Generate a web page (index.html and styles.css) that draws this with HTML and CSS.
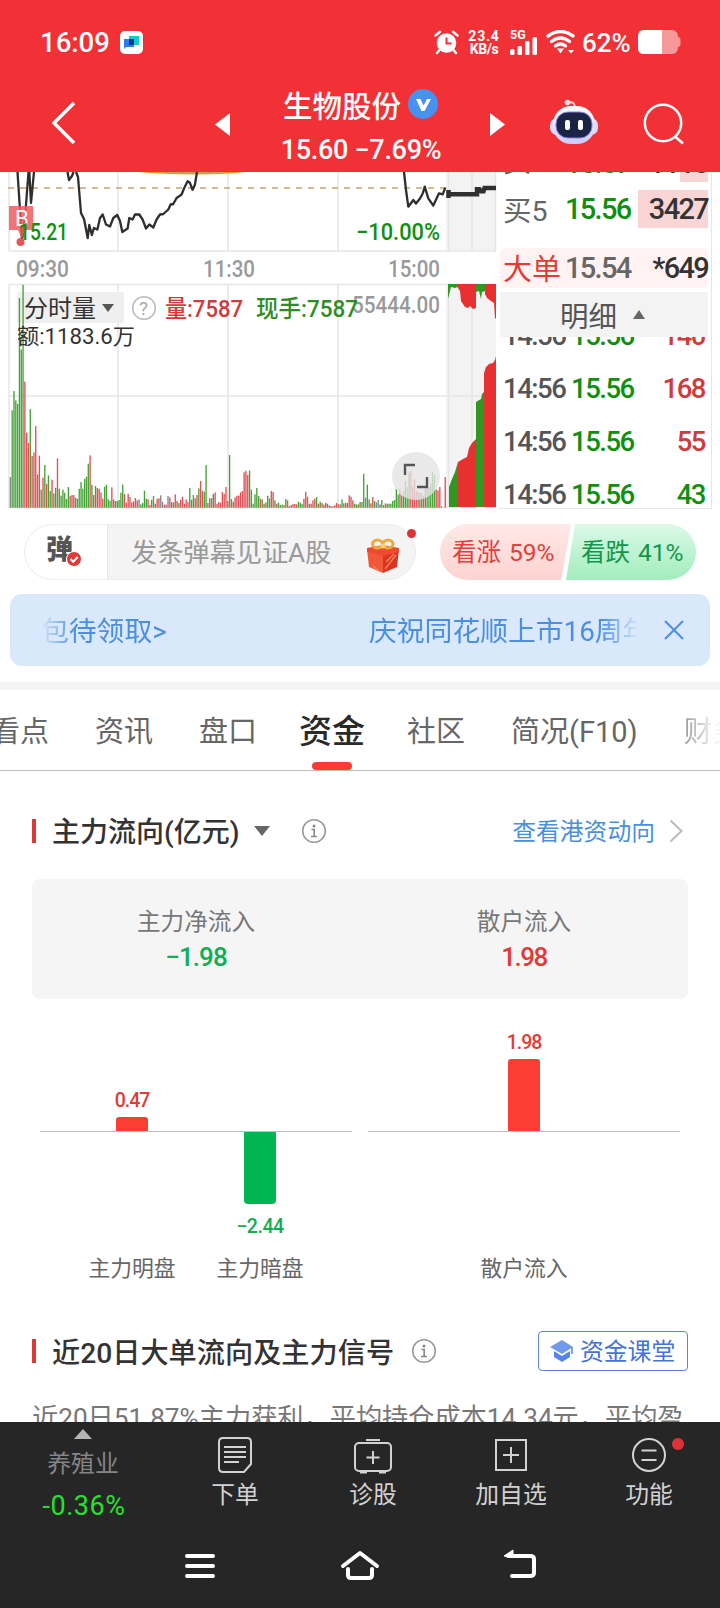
FILE: index.html
```html
<!DOCTYPE html>
<html lang="zh-CN">
<head>
  <meta charset="UTF-8" />
  <meta name="viewport" content="width=device-width, initial-scale=1.0"/>
  <title>生物股份</title>
  <link rel="stylesheet" href="styles.css">
</head>
<body>
  <header class="top">
    <div class="status">
      <span class="clock">16:09</span>
      <svg class="app-icon" width="23" height="23" viewBox="0 0 23 23">
        <rect width="23" height="23" rx="5" fill="#fff"/>
        <path d="M9 5h10v9H9z" fill="#18c8cf"/>
        <path d="M4 8h10v8H6l-2 2z" fill="#2b7cf2"/>
        <path d="M9 8h5v6H9z" fill="#0b3c8c"/>
      </svg>
      <svg class="alarm" width="25" height="25" viewBox="0 0 25 25">
        <circle cx="12.5" cy="13" r="9.8" fill="#fff"/>
        <path d="M1.5 5.5 6 1.8M23.5 5.5 19 1.8M5.5 20 3 23M19.5 20l2.5 3" stroke="#fff" stroke-width="2.4" stroke-linecap="round"/>
        <path d="M12.5 7.500v6h5" fill="none" stroke="#f23137" stroke-width="2"/>
      </svg>
      <div class="speed"><span>23.4</span><span>KB/s</span></div>
      <div class="signal">
        <span>5G</span>
        <svg width="28" height="18" viewBox="0 0 28 18" fill="#fff">
          <rect x="0" y="12" width="4.5" height="6" rx="1.5"/>
          <rect x="7.5" y="9" width="4.5" height="9" rx="1.5"/>
          <rect x="15" y="4" width="4.5" height="14" rx="1.5"/>
          <rect x="22.5" y="0" width="4.5" height="18" rx="1.5"/>
        </svg>
      </div>
      <svg class="wifi" width="30" height="24" viewBox="0 0 30 24">
        <g fill="none" stroke="#fff" stroke-width="3.4" stroke-linecap="round">
          <path d="M2 6Q14.500-3 27 6"/>
          <path d="M5.500 11.500Q14.500 4.500 23.500 11.500"/>
          <path d="M9.500 16Q14.500 12 19.500 16"/>
        </g>
        <path d="M11 18.500h7l-3.500 5zM22 20h6l-3 3.500z" fill="#fff"/>
      </svg>
      <span class="percent">62%</span>
      <svg class="battery" width="43" height="24" viewBox="0 0 43 24">
        <rect width="40" height="24" rx="6" fill="#fff" opacity=".5"/>
        <path d="M40 7q2.500 0 2.500 3v4q0 3-2.500 3z" fill="#fff" opacity=".5"/>
        <path d="M6 0h18v24H6q-6 0-6-6V6q0-6 6-6z" fill="#fff"/>
      </svg>
    </div>

    <div class="nav">
      <svg class="back" width="24" height="44" viewBox="0 0 24 44"><path d="M22 2 2 22l20 20" fill="none" stroke="#fff" stroke-width="3.5"/></svg>
      <svg class="prev" width="15" height="23" viewBox="0 0 15 23"><path d="M15 0v23L0 11.500z" fill="#fff"/></svg>
      <div class="stock">
        <div class="stock-name"><span>生物股份</span>
          <svg width="30" height="30" viewBox="0 0 30 30"><circle cx="15" cy="15" r="15" fill="#4792ee"/><path d="M8 10h4.500l3 6.500L19 10h4l-6.500 12h-3z" fill="#fff"/></svg>
        </div>
        <div class="stock-price">15.60 −7.69%</div>
      </div>
      <svg width="15" height="23" viewBox="0 0 15 23"><path d="M0 0v23l15-11.500z" fill="#fff"/></svg>
      <svg class="robot" width="48" height="46" viewBox="0 0 48 46">
        <defs>
          <linearGradient id="head" x1="0" y1="0" x2="0" y2="1"><stop offset="0" stop-color="#fff"/><stop offset="1" stop-color="#ccc9fb"/></linearGradient>
        </defs>
        <path d="M18 3.500q7-1.500 7 5" fill="none" stroke="#f9d3dc" stroke-width="2"/>
        <circle cx="17.5" cy="3.5" r="2.8" fill="#fbdce2"/>
        <rect x="0" y="19" width="48" height="17" rx="7" fill="#dcd9f8"/>
        <rect x="3" y="7" width="42" height="38" rx="18" fill="url(#head)"/>
        <rect x="6" y="13" width="36" height="26" rx="12" fill="#1a2545" stroke="#8d80e8" stroke-width="1"/>
        <rect x="15" y="21" width="5" height="10" rx="2" fill="#fff"/>
        <rect x="28" y="21" width="5" height="10" rx="2" fill="#fff"/>
      </svg>
      <svg class="search" width="42" height="42" viewBox="0 0 42 42"><g fill="none" stroke="#fff" stroke-width="2.5"><circle cx="20" cy="20" r="18.2"/><path d="m32 33.500 8 7"/></g></svg>
    </div>
  </header>

  <section class="quote">
    <svg class="chart" width="498" height="337" viewBox="0 172 498 337">
      <defs><clipPath id="plot"><rect x="9" y="172" width="487" height="337"/></clipPath></defs>
      <rect x="446" y="172" width="50" height="79" fill="#f3f3f3"/>
      <rect x="446" y="284" width="50" height="224" fill="#f3f3f3"/>
      <path d="M9 172v79M118 172v79M228 172v79M338 172v79M448.500 172v79M472 172v79M495.500 172v79M9 251h487M9 284.500h487M9 284v224M118 284v224M228 284v224M338 284v224M448.500 284v224M472 284v224M9 396h487M9 507.500h487" stroke="#e6e6e6" stroke-width="1.5" fill="none"/>
      <path d="M8 188h438" stroke="#c4a56a" stroke-width="1.5" stroke-dasharray="6 6"/>
      <path d="M138 172h108q-20 2-50 2.500-35-.3-58-2.500z" fill="#f5951f"/>
      <path d="M165 172h58v1.500q-29 1-58 0z" fill="#c9a050"/>
      <g clip-path="url(#plot)" fill="none" stroke="#2e2e2e" stroke-width="2.3" stroke-linejoin="round">
        <path d="M17.500 172 20 210l2 30 3-22 3.500-46M29.300 172l1.700 31 3-31M67.500 172l1.500 8 3-4 1.500-4M76 172l2 5 3 36 3 6 3.700 19 1.600-13 2.600 10 2-7 3.500 1.500 2.600-11.500 2.700-3.500 3.300 10 4 2 3.300-8.500 4-3 2.700 6 2.300 11 5.300-3.500 1.700-10.500 3.300 1.500 2.400-5h4.300l3.300 5 3.400 9 3.300-4 4 3 3.300-8 3.400-5 3.300-.5 5-4.500 2.300-5 2.700-.5 3.300-6 5-3.500 2.400-6 3.600-7.300 2.300 1.600 2.700 7 2.300-5L197 172M404 172l2 18 2.300 16.700 5-6.700 2.700 3.500 4-5 2.700-5 2-6.800 3.600 11.600 5 7.300 5.700-12.300 3.700 1 2.600-6.700"/>
      </g>
      <path d="M448.500 190v8M448.500 194.300H477v-5h2.500l1.500 2h2.500l1-3.300H496" fill="none" stroke="#303030" stroke-width="4.500"/>
      <path d="M9 206h24v24h-8l-3 9-4-9H9z" fill="#ee5d5f" opacity=".85"/>
      <circle cx="20.5" cy="242" r="4" fill="#ea5557"/>
      <text x="15" y="226" class="mark">B</text>
      <text x="19" y="240" class="num green" textLength="49" lengthAdjust="spacingAndGlyphs">15.21</text>
      <text x="356" y="240" class="num green" textLength="84" lengthAdjust="spacingAndGlyphs">−10.00%</text>
      <text x="16" y="277" class="num gray" textLength="53" lengthAdjust="spacingAndGlyphs">09:30</text>
      <text x="203" y="277" class="num gray" textLength="52" lengthAdjust="spacingAndGlyphs">11:30</text>
      <text x="388" y="277" class="num gray" textLength="52" lengthAdjust="spacingAndGlyphs">15:00</text>

      <rect x="17" y="292" width="107" height="31" rx="3" fill="#efefef"/>
      <g id="volume"></g>

      <!-- call auction -->
      <path d="M448 284h10v3l-3 1-4-1-3 12z" fill="#33961f"/>
      <path d="M458 284h18v24l-3 1-3-3-2 2-3-1-4-6-1-10-2-3z" fill="#e83030"/>
      <path d="M476 284h9v7l-3 1-1 7-2-8-3 1z" fill="#33961f"/>
      <path d="M485 284h11v35l-1-1-1-15-3-2-4-3-1-2-1-2z" fill="#e83030"/>
      <path d="M449 507v-20l3-8 3-7 3-10v45z" fill="#33961f"/>
      <path d="M458 507v-45l5-3 4-2 2-9 3-5 4-4v68z" fill="#e83030"/>
      <path d="M476 507V402l5-3 1-5 2-2v115z" fill="#33961f"/>
      <path d="M484 507V373l2-6 3-3 4-1 2-3 1-4v151z" fill="#e83030"/>

      <text x="24" y="316.5" class="cn" textLength="72">分时量</text>
      <path d="M102 304h12l-6 8z" fill="#555"/>
      <circle cx="144" cy="308" r="11.3" fill="none" stroke="#bbb" stroke-width="1.5"/>
      <text x="139" y="315" class="qmark">?</text>
      <text x="165" y="317" class="cn cn-red" textLength="78" lengthAdjust="spacingAndGlyphs">量:7587</text>
      <text x="352" y="313" class="num gray" textLength="88" lengthAdjust="spacingAndGlyphs">55444.00</text>
      <text x="256" y="317" class="cn cn-green" textLength="102" lengthAdjust="spacingAndGlyphs">现手:7587</text>
      <text x="17" y="344" class="cn cn-small" textLength="118" lengthAdjust="spacingAndGlyphs">额:1183.6万</text>

      <circle cx="416" cy="476" r="24" fill="#e3e3e3" opacity=".8"/>
      <path d="M405 475v-10h10M417 487h10v-10" fill="none" stroke="#555" stroke-width="2.4"/>
    </svg>

    <div class="book">
      <div class="book-row book-cut"><span class="b-label">买4</span><span class="b-price green">15.57</span><span class="b-vol">1118</span></div>
      <div class="book-row"><span class="b-label">买5</span><span class="b-price green">15.56</span><span class="b-vol b-fill">3427</span></div>
      <div class="book-row big"><span class="b-label">大单</span><span class="b-price">15.54</span><span class="b-vol">*649</span></div>
      <div class="detail">明细<svg width="12" height="9" viewBox="0 0 12 9"><path d="M6 0l6 9H0z" fill="#666"/></svg></div>
      <div class="ticks">
        <div class="tick"><span>14:56</span><span class="green">15.56</span><b class="up">140</b></div>
        <div class="tick"><span>14:56</span><span class="green">15.56</span><b class="up">168</b></div>
        <div class="tick"><span>14:56</span><span class="green">15.56</span><b class="up">55</b></div>
        <div class="tick"><span>14:56</span><span class="green">15.56</span><b class="green">43</b></div>
      </div>
    </div>
  </section>

  <section class="barrage">
    <div class="say">
      <div class="say-switch">
        <span>弹</span>
        <svg class="say-check" width="16" height="16" viewBox="0 0 16 16"><circle cx="8" cy="8" r="7.5" fill="#e0393a" stroke="#fff"/><path d="m4.500 8 2.700 2.800 4.500-4.800" fill="none" stroke="#fff" stroke-width="2"/></svg>
      </div>
      <div class="say-input"><span>发条弹幕见证A股</span>
        <svg width="34" height="36" viewBox="0 0 34 36">
          <path d="M1 11 17 15v20L3 29z" fill="#f0583a"/>
          <path d="M33 11 17 15v20l14-6z" fill="#da3524"/>
          <path d="M1 10 17 7l16 3v4l-16 4L1 14z" fill="#ee4a30"/>
          <path d="m19 31 11-14M20 24l8-8M7 28l6 5" stroke="#f57d55" stroke-width="1.5"/>
          <g fill="none" stroke="#eea83c" stroke-width="3"><ellipse cx="11.5" cy="6" rx="5" ry="4"/><ellipse cx="22" cy="6" rx="5" ry="4"/></g>
          <circle cx="17" cy="8" r="2.5" fill="#ffd27c"/>
        </svg>
      </div>
      <i class="dot say-dot"></i>
    </div>
    <div class="vote">
      <div class="vote-up">看涨 59%</div>
      <div class="vote-down">看跌 41%</div>
    </div>
  </section>

  <section class="notice">
    <div class="marquee"><span>包待领取&gt;</span><span>庆祝同花顺上市16周年</span></div>
    <svg width="20" height="20" viewBox="0 0 20 20"><path d="m1 1 18 18M19 1 1 19" stroke="#4a8fe0" stroke-width="2"/></svg>
  </section>

  <nav class="tabs">
    <span>看点</span><span>资讯</span><span>盘口</span><span class="active">资金</span><span>社区</span><span>简况(F10)</span><span>财务</span>
  </nav>

  <section class="panel">
    <div class="panel-head">
      <h2>主力流向(亿元)</h2>
      <svg class="caret" width="16" height="10" viewBox="0 0 16 10"><path d="M0 0h16L8 10z" fill="#666"/></svg>
      <svg class="info" width="26" height="26" viewBox="0 0 26 26"><circle cx="13" cy="13" r="11.3" fill="none" stroke="#999" stroke-width="1.6"/><circle cx="13" cy="8" r="1.5" fill="#888"/><path d="M10.500 11.500h2.700v6.500M10 18.500h6" fill="none" stroke="#888" stroke-width="1.6"/></svg>
      <a class="more"><span>查看港资动向</span><svg width="14" height="24" viewBox="0 0 14 24"><path d="m1.500 1.500 11 10.500-11 10.500" fill="none" stroke="#bbb" stroke-width="2"/></svg></a>
    </div>

    <div class="summary">
      <div><span>主力净流入</span><b class="fall">−1.98</b></div>
      <div><span>散户流入</span><b class="rise">1.98</b></div>
    </div>

    <div class="flow">
      <div class="group">
        <div class="col">
          <div class="above"><span class="rise">0.47</span><i class="bar" style="height: 14px"></i></div>
          <div class="below"></div>
          <label>主力明盘</label>
        </div>
        <div class="col">
          <div class="above"></div>
          <div class="below"><i class="bar" style="height: 72px"></i><span class="fall">−2.44</span></div>
          <label>主力暗盘</label>
        </div>
      </div>
      <div class="group">
        <div class="col">
          <div class="above"><span class="rise">1.98</span><i class="bar" style="height: 72px"></i></div>
          <div class="below"></div>
          <label>散户流入</label>
        </div>
      </div>
    </div>

    <div class="panel-head second">
      <h2>近20日大单流向及主力信号</h2>
      <svg class="info info-near" width="26" height="26" viewBox="0 0 26 26"><circle cx="13" cy="13" r="11.3" fill="none" stroke="#999" stroke-width="1.6"/><circle cx="13" cy="8" r="1.5" fill="#888"/><path d="M10.500 11.500h2.700v6.500M10 18.500h6" fill="none" stroke="#888" stroke-width="1.6"/></svg>
      <a class="lesson"><svg width="24" height="22" viewBox="0 0 24 22"><path d="M12 0 0 7l12 7 11-7z" fill="#7199ee"/><path d="M4 11v6l8 5 8-5v-6l-8 5z" fill="#5585ea"/><path d="M22 7v7" stroke="#5585ea" stroke-width="1.5"/></svg><span>资金课堂</span></a>
    </div>
    <p class="desc">近20日51.87%主力获利，平均持仓成本14.34元，平均盈</p>
  </section>

  <footer class="bottom">
    <div class="actions">
      <div class="sector">
        <svg width="18" height="10" viewBox="0 0 18 10"><path d="M9 0l9 10H0z" fill="#b5b5b5"/></svg>
        <span>养殖业</span>
        <b>-0.36%</b>
      </div>
      <div class="action">
        <svg width="40" height="40" viewBox="0 0 40 40"><path d="M8 3h24q4 0 4 4v22l-7 8H8q-4 0-4-4V7q0-4 4-4zM9 12h22M9 17h22M9 22h22M9 27h15" fill="none" stroke="#d2d2d2" stroke-width="2"/></svg>
        下单
      </div>
      <div class="action">
        <svg width="40" height="40" viewBox="0 0 40 40"><g fill="none" stroke="#d2d2d2" stroke-width="2"><rect x="2" y="8" width="36" height="28" rx="4"/><path d="M13 5h14M20 16v13M13.500 22.500h13M7 37.500h7M26 37.500h7"/></g></svg>
        诊股
      </div>
      <div class="action">
        <svg width="40" height="40" viewBox="0 0 40 40"><path d="M5 5h30v30H5zM20 12v16M12 20h16" fill="none" stroke="#d2d2d2" stroke-width="2"/></svg>
        加自选
      </div>
      <div class="action">
        <svg width="40" height="40" viewBox="0 0 40 40"><g fill="none" stroke="#d2d2d2" stroke-width="2"><circle cx="20" cy="20" r="16"/><path d="M12.500 15.500h15M12.500 25h15"/></g></svg>
        功能
        <i class="dot action-dot"></i>
      </div>
    </div>
    <div class="keys">
      <svg width="40" height="40" viewBox="0 0 40 40"><path d="M7 10h26M7 20h26M7 30h26" stroke="#fff" stroke-width="4" stroke-linecap="round"/></svg>
      <svg width="40" height="40" viewBox="0 0 40 40"><path d="M3 20 20 7l17 13M8 23v6q0 3 3 3h18q3 0 3-3v-6" fill="none" stroke="#fff" stroke-width="4" stroke-linecap="round" stroke-linejoin="round"/></svg>
      <svg width="40" height="40" viewBox="0 0 40 40"><path d="M12 30h18q4 0 4-3V13q0-3-4-3H8" fill="none" stroke="#fff" stroke-width="4" stroke-linecap="round"/><path d="M4 10 13 4v7z" fill="#fff" stroke="#fff" stroke-linejoin="round"/></svg>
    </div>
  </footer>

  <script src="volume.js"></script>
</body>
</html>
```
FILE: styles.css
```css
* {
  box-sizing: border-box;
}

body {
  margin: 0;
  width: 720px;
  height: 1608px;
  overflow: hidden;
  display: flex;
  flex-direction: column;
  background-color: #fff;
  color: #333;
  font-family: Roboto, "Noto Sans CJK SC", sans-serif;
}

svg {
  display: block;
  flex: none;
}

i, b {
  font-style: normal;
  font-weight: 400;
}

.green {
  color: #0f8f0f;
  fill: #0f8f0f;
}

.up {
  color: #cf3a3a;
}

.rise {
  color: #e23b36;
}

.fall {
  color: #0fae52;
}

.dot {
  position: absolute;
  border-radius: 50%;
  background-color: #e03236;
}

/* header */
.top {
  flex: none;
  height: 172px;
  background-color: #f23137;
  color: #fff;
}

.status {
  display: flex;
  align-items: center;
  height: 84px;
  padding-left: 40px;
  white-space: nowrap;
}

.clock {
  width: 80px;
  padding-top: 1px;
  font-size: 27.5px;
  font-weight: 500;
}

.alarm {
  margin-left: 291px;
}

.speed {
  display: flex;
  flex-direction: column;
  align-items: center;
  width: 36px;
  margin-left: 7px;
  padding-top: 1px;
  font-size: 14px;
  font-weight: 700;
  line-height: 13px;
}

.speed span {
  letter-spacing: -0.4px;
}

.speed span:first-child {
  letter-spacing: 0.8px;
}

.signal {
  display: flex;
  flex-direction: column;
  margin-left: 8px;
  width: 28px;
  font-size: 12.5px;
  font-weight: 700;
  line-height: 10px;
}

.signal svg {
  margin-top: -3px;
}

.wifi {
  margin-left: 8px;
}

.percent {
  width: 56px;
  margin-left: 6px;
  padding-top: 1px;
  font-size: 26px;
  font-weight: 500;
}

.nav {
  display: flex;
  align-items: center;
  height: 80px;
  padding-left: 52px;
}

.back {
  margin-top: -3px;
}

.prev {
  margin-left: 139px;
}

.stock {
  width: 260px;
  padding-top: 4px;
  text-align: center;
}

.stock-name {
  display: flex;
  align-items: center;
  justify-content: center;
  gap: 7px;
  height: 43px;
  padding-left: 1px;
  font-size: 29.5px;
  font-weight: 500;
}

.stock-name span {
  margin-top: -2px;
}

.stock-name svg {
  margin-top: -1px;
}

.stock-price {
  height: 43px;
  padding-left: 2px;
  font-size: 27px;
  font-weight: 500;
  line-height: 48px;
  letter-spacing: -0.3px;
}

.robot {
  margin-left: 45px;
  margin-top: -4px;
}

.search {
  margin-left: 45px;
}

/* quote area */
.quote {
  flex: none;
  display: flex;
  height: 337px;
  overflow: hidden;
}

.num {
  font-size: 23px;
  font-weight: 500;
}

.gray {
  fill: #999;
}

.mark {
  font-size: 22px;
  fill: #fff;
}

.qmark {
  font-size: 19px;
  fill: #aaa;
}

.cn {
  font-size: 24px;
  fill: #333;
}

.cn-red {
  font-weight: 500;
  fill: #cf3a3a;
}

.cn-green {
  font-weight: 500;
  fill: #2d8c22;
}

.cn-small {
  font-size: 22px;
}

.book {
  width: 214px;
  padding-left: 2px;
  padding-right: 3px;
  border-right: 1px solid #e6e6e6;
  border-bottom: 1px solid #e6e6e6;
}

.book-row {
  display: flex;
  align-items: center;
  height: 38px;
  margin: 0 0 20px;
  font-size: 29px;
  letter-spacing: -1.7px;
  color: #333;
}

.book-cut {
  align-items: flex-end;
  height: 10px;
  margin-bottom: 8px;
  overflow: hidden;
}

.book-cut span {
  line-height: 38px;
}

.book-cut .b-vol {
  background: linear-gradient(90deg, transparent 42px, #f9d5d6 42px);
}

.b-label {
  width: 65px;
  padding-left: 3px;
  margin-top: -2px;
  font-size: 28.5px;
  letter-spacing: 0;
  color: #666;
}

.b-price {
  width: 73px;
  font-weight: 500;
}

.b-vol {
  width: 70px;
  line-height: 38px;
  text-align: right;
  font-weight: 500;
}

.b-fill {
  background-color: #f9d5d6;
}

.big {
  height: 40px;
  margin-bottom: 4px;
  border-radius: 6px;
  background-color: #fff2f2;
}

.big .b-label {
  font-size: 29px;
  color: #e23b36;
}

.big .b-price {
  color: #666;
}

.detail {
  display: flex;
  align-items: center;
  gap: 16px;
  height: 45px;
  padding-left: 60px;
  background-color: #f3f3f3;
  color: #555;
  font-size: 28.5px;
}

.ticks {
  display: flex;
  flex-direction: column;
  height: 171px;
  overflow: hidden;
}

.tick {
  flex: none;
  display: flex;
  align-items: center;
  height: 53px;
  font-size: 27.5px;
  font-weight: 500;
  letter-spacing: -1.5px;
  color: #555;
}

.tick:first-child {
  margin-top: -28px;
}

.tick span {
  width: 68px;
  padding-left: 3px;
}

.tick .green {
  color: #0f8f0f;
}

.tick b {
  width: 69px;
  font-weight: 500;
  text-align: right;
}

/* barrage row */
.barrage {
  flex: none;
  display: flex;
  gap: 24px;
  height: 56px;
  margin: 15px 0 14px 24px;
}

.say {
  position: relative;
  display: flex;
  width: 392px;
  border: 1px solid #ececec;
  border-radius: 28px;
  background-color: #f4f4f4;
}

.say-switch {
  position: relative;
  width: 83px;
  padding: 6px 0 0 21px;
  border-right: 1px solid #e6e6e6;
  border-radius: 28px 0 0 28px;
  background-color: #fff;
  font-size: 27px;
  line-height: 38px;
  font-weight: 900;
  color: #555;
}

.say-check {
  position: absolute;
  left: 41px;
  top: 26px;
}

.say-input {
  display: flex;
  align-items: center;
  gap: 35px;
  padding-left: 23px;
  font-size: 26.2px;
  color: #999;
  white-space: nowrap;
}

.say-input span {
  margin-top: -2px;
}

.say-input svg {
  margin-top: 8px;
}

.say-dot {
  width: 9px;
  height: 9px;
  right: -1px;
  top: 4px;
}

.vote {
  display: flex;
  width: 256px;
  border-radius: 28px;
  overflow: hidden;
  font-size: 24.5px;
  line-height: 57px;
}

.vote-up {
  width: 131px;
  padding-left: 12px;
  word-spacing: 2px;
  background: linear-gradient(#ffe9e7, #fcd3d0);
  color: #e0403c;
  clip-path: polygon(0 0, 100% 0, 121px 100%, 0 100%);
}

.vote-down {
  width: 130px;
  margin-left: -5px;
  padding-left: 15px;
  word-spacing: 2px;
  background: linear-gradient(#dcf9e6, #a2edbd);
  color: #12964a;
  clip-path: polygon(9px 0, 100% 0, 100% 100%, 0 100%);
}

/* notice */
.notice {
  flex: none;
  display: flex;
  align-items: center;
  justify-content: space-between;
  height: 72px;
  margin: 0 10px 16px;
  padding: 0 26px 0 31px;
  border-radius: 12px;
  background-color: #dae8fb;
}

.marquee {
  display: flex;
  width: 596px;
  padding-top: 4px;
  overflow: hidden;
  font-size: 27.8px;
  line-height: 40px;
  color: #4a8fe0;
  white-space: nowrap;
  -webkit-mask-image: linear-gradient(90deg, transparent, #000 34px, #000 560px, transparent 598px);
  mask-image: linear-gradient(90deg, transparent, #000 34px, #000 560px, transparent 598px);
}

.marquee span {
  flex: none;
}

.marquee span:first-child {
  width: 328px;
}

/* tabs */
.tabs {
  flex: none;
  display: flex;
  height: 89px;
  border-top: 8px solid #f4f4f4;
  border-bottom: 1px solid #bdbdbd;
  font-size: 29px;
  line-height: 84px;
  color: #666;
  white-space: nowrap;
  overflow: hidden;
}

.tabs span {
  flex: none;
  padding: 0 23px;
}

.tabs span:first-child {
  margin-left: -32px;
}

.tabs span:last-child {
  color: transparent;
  background: linear-gradient(90deg, #999 23px, #f4f4f4 52px);
  -webkit-background-clip: text;
  background-clip: text;
}

.tabs .active {
  display: flex;
  flex-direction: column;
  align-items: center;
  padding: 0 19px;
  font-size: 33px;
  font-weight: 500;
  color: #2a2a2a;
}

.tabs .active::after {
  content: "";
  width: 40px;
  height: 8px;
  margin-top: -12px;
  border-radius: 4px;
  background-color: #f93c33;
}

/* money flow */
.panel {
  flex: 1;
  min-height: 0;
  padding: 47px 32px 0;
  overflow: hidden;
}

.panel-head {
  display: flex;
  align-items: center;
  height: 26px;
  white-space: nowrap;
}

.panel-head::before {
  content: "";
  width: 4px;
  height: 24px;
  margin-right: 16px;
  background-color: #dc3a38;
}

h2 {
  margin: -2px 0 0;
  font-size: 28px;
  font-weight: 500;
  color: #333;
}

.caret {
  margin-left: 15px;
}

.info {
  margin-left: 31px;
}

.info-near {
  margin-left: 17px;
}

.more {
  display: flex;
  align-items: center;
  gap: 14px;
  margin-left: auto;
  padding-right: 5px;
  font-size: 23.8px;
  color: #4a90e0;
}

.more span {
  margin-top: -3px;
}

.summary {
  display: flex;
  height: 120px;
  margin-top: 35px;
  border-radius: 8px;
  background-color: #f5f5f5;
}

.summary div {
  display: flex;
  flex: 1;
  flex-direction: column;
  align-items: center;
  padding-top: 26px;
  font-size: 23.6px;
  line-height: 35px;
  color: #777;
}

.summary b {
  font-size: 26px;
  font-weight: 500;
  letter-spacing: -1.5px;
}

.summary .fall {
  letter-spacing: -0.9px;
}

.flow {
  display: flex;
  gap: 16px;
  padding: 0 8px;
}

.group {
  display: flex;
  justify-content: center;
  flex: 1;
  background: linear-gradient(#c4c4c4, #c4c4c4) 0 132px / 100% 1px no-repeat;
}

.col {
  display: flex;
  flex-direction: column;
  width: 128px;
  font-size: 19.5px;
  font-weight: 500;
  letter-spacing: -1px;
}

.above,
.below {
  display: flex;
  flex-direction: column;
  align-items: center;
}

.above {
  justify-content: flex-end;
  height: 132px;
}

.below {
  height: 123px;
  padding-top: 1px;
}

.above span {
  margin-bottom: 5px;
}

.below span {
  margin-top: 11px;
  letter-spacing: -0.4px;
}

.bar {
  width: 32px;
  border-radius: 3px 3px 0 0;
  background-color: #fb3d33;
}

.below .bar {
  border-radius: 0 0 4px 4px;
  background-color: #00b652;
}

.col label {
  font-size: 21.8px;
  font-weight: 400;
  line-height: 30px;
  letter-spacing: 0;
  text-align: center;
  color: #666;
}

.second {
  height: 40px;
  margin-top: 47px;
}

.second h2 {
  margin-top: -2px;
  font-size: 28.2px;
}

.lesson {
  display: flex;
  align-items: center;
  gap: 6px;
  width: 150px;
  height: 40px;
  margin-left: auto;
  padding-left: 11px;
  border: 1.5px solid #5f86cf;
  border-radius: 4px;
  font-size: 23.8px;
  color: #4573d8;
}

.lesson span {
  margin-top: -3px;
}

.desc {
  margin: 27px 0 0;
  font-size: 26.2px;
  line-height: 40px;
  color: #777;
  white-space: nowrap;
}

/* bottom bar */
.bottom {
  flex: none;
  height: 186px;
  background-color: #262626;
}

.actions {
  display: flex;
  height: 102px;
}

.sector {
  display: flex;
  flex-direction: column;
  align-items: center;
  width: 166px;
  padding-top: 7px;
  font-size: 23.8px;
  line-height: 51px;
  color: #858589;
}

.sector b {
  margin-top: -9px;
  padding-left: 2px;
  font-size: 27px;
  letter-spacing: 0.5px;
  color: #27e02d;
}

.action {
  position: relative;
  display: flex;
  flex-direction: column;
  align-items: center;
  width: 138px;
  padding-top: 13px;
  font-size: 23.8px;
  line-height: 40px;
  color: #d2d2d2;
}

.action-dot {
  width: 12px;
  height: 12px;
  left: 92px;
  top: 16px;
}

.keys {
  display: flex;
  justify-content: center;
  gap: 120px;
  padding-top: 22px;
}
```
FILE: volume.js
```javascript
// one entry per minute: colour (r up, g down, n flat) and height
const minutes = `n92 g292 g350 g322 g312 g629 g475 g669 r378 r225 r194 g296 r155 r166 r245 r100 r156 g54 r90 g128
r72 g97 g50 r84 g43 g60 r148 g57 g36 g54 g45 g26 g62 r35 r38 r38 g30 g27 g57 g77 g57 g86 g93 g132 r157 g69 r38 g65 r59 r57
r46 r27 g63 g69 g25 g21 r61 r25 g20 g20 g23 g45 g69 r41 r15 r42 r32 r16 r19 r29 r22 n25 g10 g14 g51 g27 r25 r8 g24 g35
r12 r27 r28 n37 n18 r9 r9 n35 r31 r17 g16 r40 r20 g14 r24 r33 r12 r25 r17 g59 g24 g38 r28 r38 g58 r80 r50 g48 g128 r14
r28 g29 g41 r46 r11 r17 r15 r47 r42 r62 r20 g158 g26 r18 r31 r36 r36 r46 r50 r106 r111 r98 g112 g54 g12 g40 g59 g35 r27
g25 r12 g16 g36 g28 r50 r47 g22 r12 g15 g8 g9 r8 g26 r22 g5 r8 r11 r11 r10 g18 g15 g11 r27 r48 r33 g12 r12 r22 r27
g32 r12 g18 r14 r9 r15 g12 r7 r5 r4 r7 r14 r10 g10 g25 r13 r15 g14 r37 r33 r22 g12 g10 r10 g17 g17 g102 n30 g69 g25
r13 r32 g20 n16 n23 g10 g23 r8 r13 g12 g12 g12 g20 g23 g57 g39 r57 g37 g50 g80 g62 g105 r110 r63 r85 r50 r47 g45 r43
g35 r57 g65 g60 g72 g107 g98 r55 r52 r62 g4 g0 r92`.split(/\s+/);

const colors = { r: "#dd5256", g: "#45a336", n: "#84848c" };
const volumeEl = document.getElementById("volume");
const bottom = 507.7;

minutes.forEach((item, i) => {
  const height = Number(item.slice(1)) / 3;
  const bar = document.createElementNS("http://www.w3.org/2000/svg", "rect");
  bar.setAttribute("x", 9.7 + i * 1.812);
  bar.setAttribute("y", bottom - height);
  bar.setAttribute("width", 1.35);
  bar.setAttribute("height", height);
  bar.setAttribute("fill", colors[item[0]]);
  volumeEl.appendChild(bar);
});
```
